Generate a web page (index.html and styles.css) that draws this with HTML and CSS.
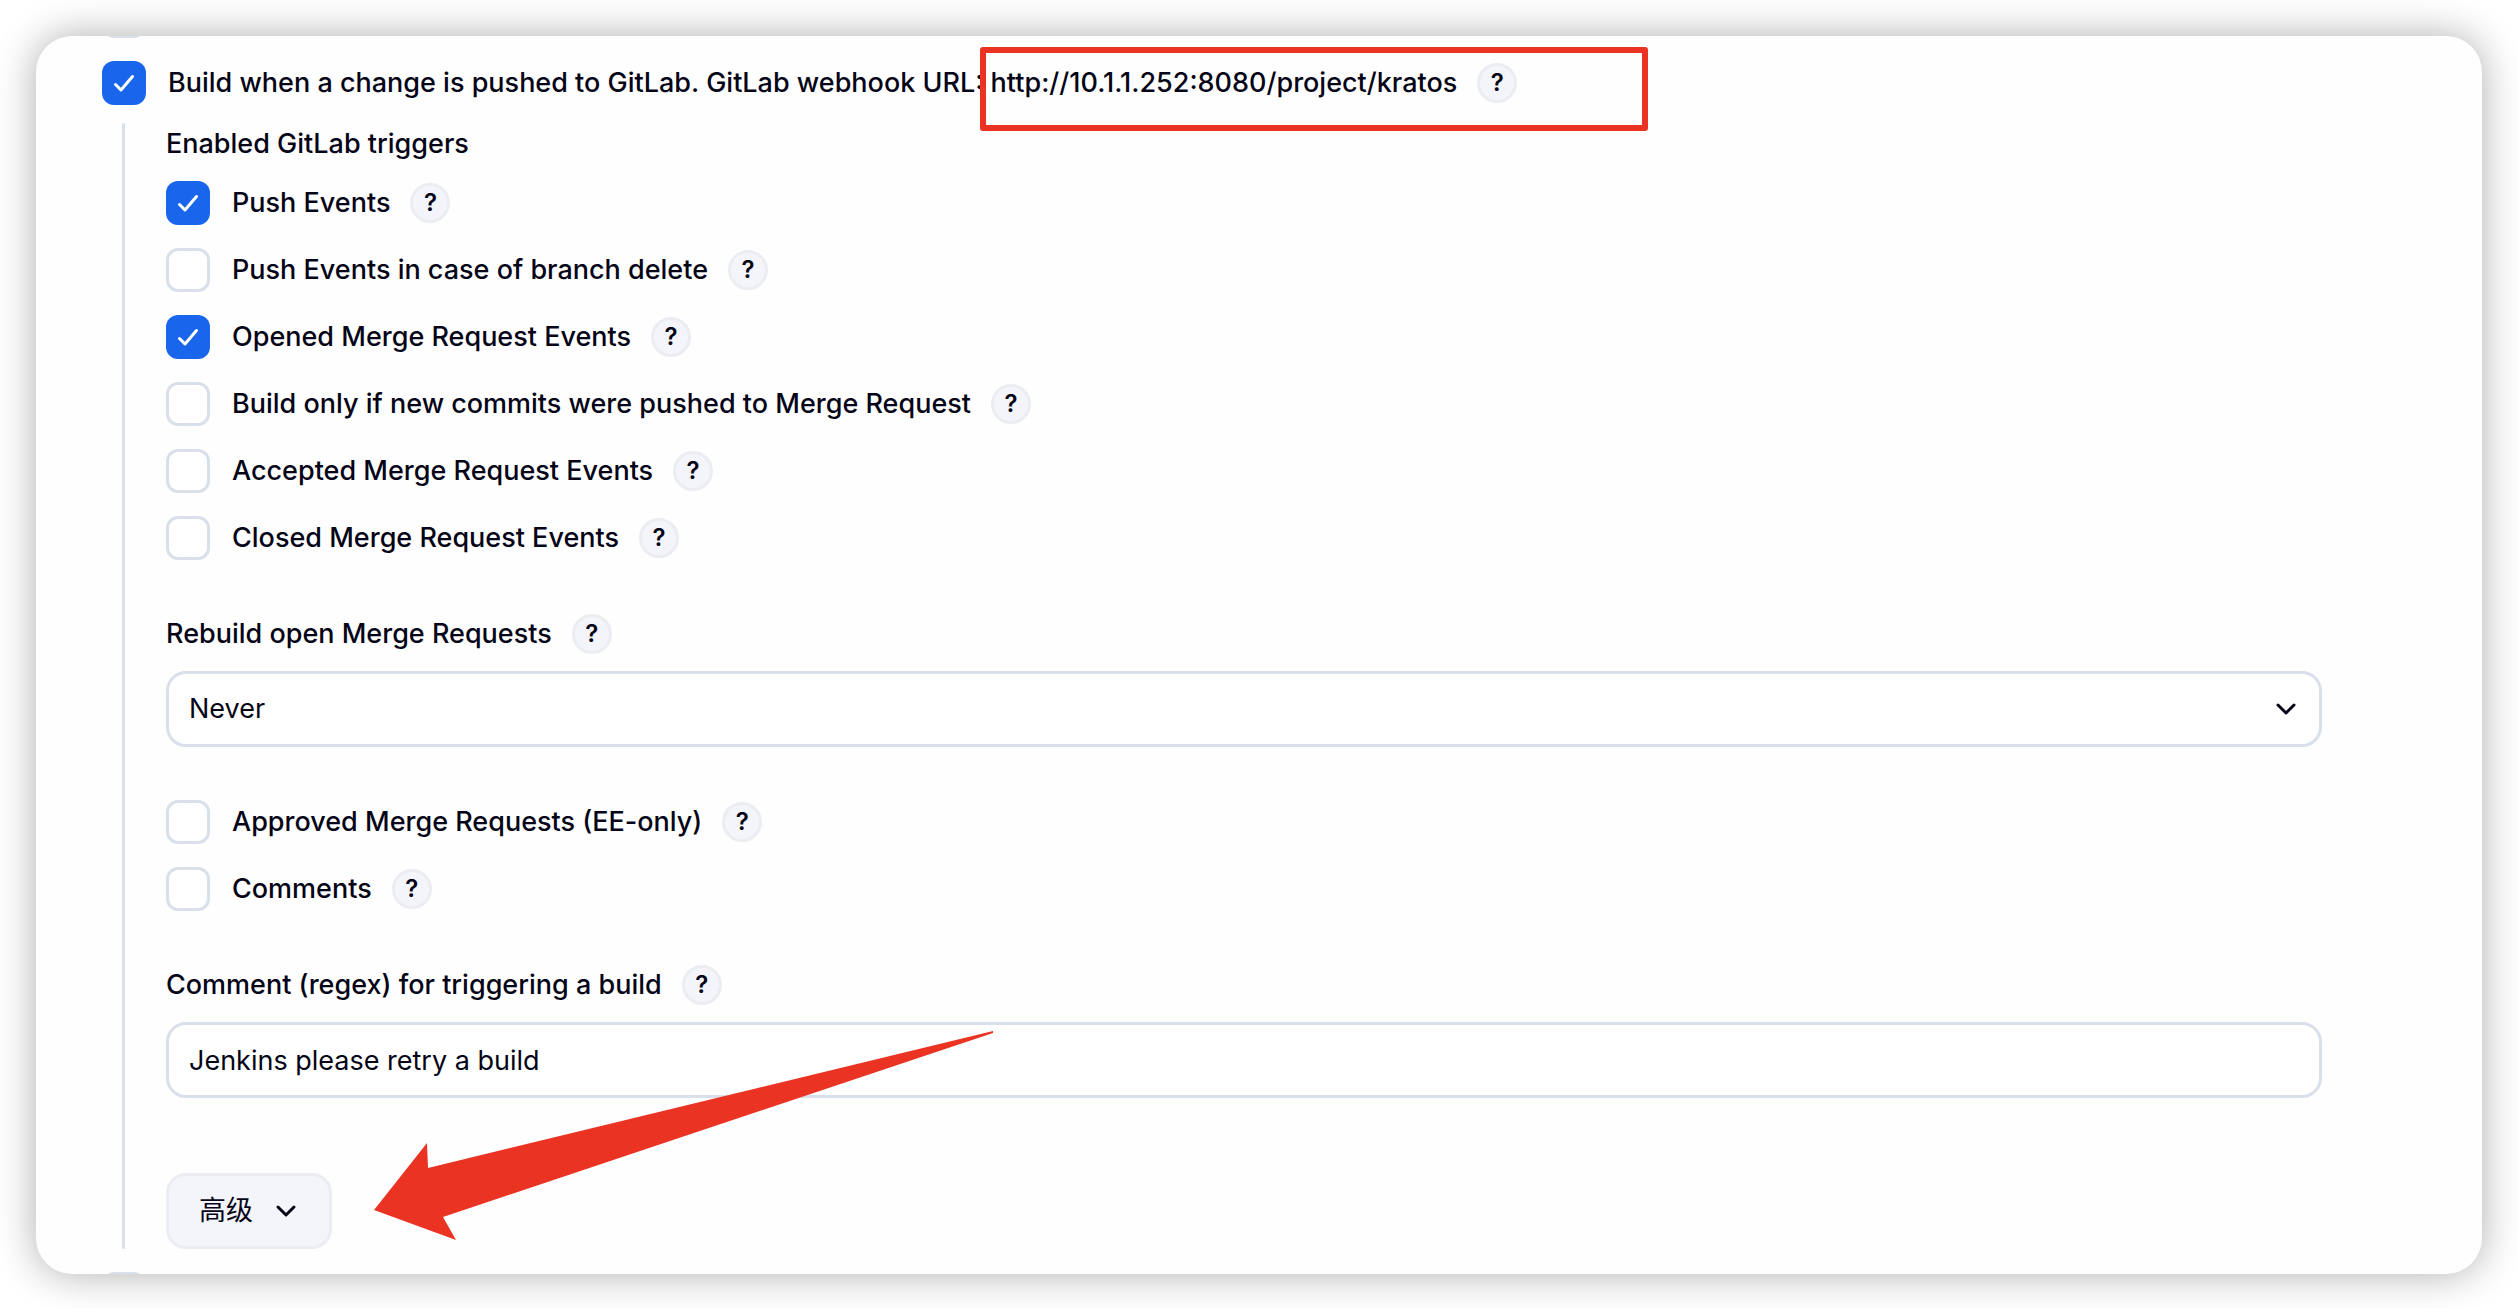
FILE: index.html
```
<!DOCTYPE html>
<html lang="zh-CN">
  <head>
    <meta charset="UTF-8" />
    <meta name="viewport" content="width=device-width, initial-scale=1.0" />
    <title>Build Triggers</title>
    <link rel="stylesheet" href="styles.css">
  </head>
  <body>
    <main class="card">
      <input class="checkbox clipped-top" type="checkbox" aria-label="Previous trigger" />

      <div class="row">
        <input class="checkbox" type="checkbox" id="gitlab" checked />
        <label for="gitlab">Build when a change is pushed to GitLab. GitLab webhook URL: http://10.1.1.252:8080/project/kratos</label>
        <button class="help" type="button">?</button>
      </div>

      <div class="nested">
        <p class="title">Enabled GitLab triggers</p>
        <div class="rows">
          <div class="row">
            <input class="checkbox" type="checkbox" id="push" checked />
            <label for="push">Push Events</label>
            <button class="help" type="button">?</button>
          </div>
          <div class="row">
            <input class="checkbox" type="checkbox" id="branch-delete" />
            <label for="branch-delete">Push Events in case of branch delete</label>
            <button class="help" type="button">?</button>
          </div>
          <div class="row">
            <input class="checkbox" type="checkbox" id="opened" checked />
            <label for="opened">Opened Merge Request Events</label>
            <button class="help" type="button">?</button>
          </div>
          <div class="row">
            <input class="checkbox" type="checkbox" id="new-commits" />
            <label for="new-commits">Build only if new commits were pushed to Merge Request</label>
            <button class="help" type="button">?</button>
          </div>
          <div class="row">
            <input class="checkbox" type="checkbox" id="accepted" />
            <label for="accepted">Accepted Merge Request Events</label>
            <button class="help" type="button">?</button>
          </div>
          <div class="row">
            <input class="checkbox" type="checkbox" id="closed" />
            <label for="closed">Closed Merge Request Events</label>
            <button class="help" type="button">?</button>
          </div>
        </div>

        <div class="field">
          <div class="field-label">
            <label for="rebuild">Rebuild open Merge Requests</label>
            <button class="help" type="button">?</button>
          </div>
          <select class="control select" id="rebuild">
            <option>Never</option>
          </select>
        </div>

        <div class="rows">
          <div class="row">
            <input class="checkbox" type="checkbox" id="approved" />
            <label for="approved">Approved Merge Requests (EE-only)</label>
            <button class="help" type="button">?</button>
          </div>
          <div class="row">
            <input class="checkbox" type="checkbox" id="comments" />
            <label for="comments">Comments</label>
            <button class="help" type="button">?</button>
          </div>
        </div>

        <div class="field">
          <div class="field-label">
            <label for="regex">Comment (regex) for triggering a build</label>
            <button class="help" type="button">?</button>
          </div>
          <input class="control" type="text" id="regex" value="Jenkins please retry a build" />
        </div>

        <button class="advanced" type="button">
          高级
          <svg class="chevron" width="24" height="24" viewBox="0 0 24 24" fill="none" stroke="currentColor" stroke-width="3" stroke-linecap="round" stroke-linejoin="round">
            <path d="M3 8l8 8 8-8" />
          </svg>
        </button>
      </div>

      <input class="checkbox clipped-bottom" type="checkbox" aria-label="Next trigger" />

      <!-- annotations -->
      <div class="mark-box"></div>
      <svg class="mark-arrow" width="620" height="210" viewBox="0 0 620 210">
        <path d="M0 179L53 112L54 137L619 0L619 2L69 186L82 209Z" fill="#ea3323" />
      </svg>
    </main>
  </body>
</html>
```
FILE: styles.css
```
* {
  margin: 0;
  padding: 0;
  box-sizing: border-box;
}
body {
  background-color: #fff;
  color: #050517;
  font-family: Inter, "Noto Sans CJK SC", sans-serif;
  font-size: 27px;
  font-weight: 500;
  line-height: 40px;
}
button,
input,
select {
  font: inherit;
  color: inherit;
}
.card {
  position: relative;
  overflow: hidden;
  margin: 36px;
  padding: 0 160px 0 66px;
  border-radius: 36px;
  background-color: #fefefe;
  box-shadow: 0 0 40px rgba(0, 0, 0, 0.32);
}

/* checkboxes */
.row,
.field-label {
  display: flex;
  align-items: center;
}
.row label {
  padding-left: 22px;
}
.checkbox {
  appearance: none;
  display: block;
  flex: none;
  width: 44px;
  height: 44px;
  border: 3px solid #d9e0ea;
  border-radius: 12px;
  background-color: #fff;
}
.checkbox:checked {
  border: none;
  background: #1966ec url("data:image/svg+xml,%3Csvg xmlns='http://www.w3.org/2000/svg' viewBox='0 0 44 44' fill='none' stroke='white' stroke-width='3' stroke-linecap='round' stroke-linejoin='round'%3E%3Cpath d='M13.5 23.5l5.5 5.500 11.500-13.500'/%3E%3C/svg%3E");
}
.clipped-top {
  margin-top: -42px;
  margin-bottom: 23px;
}
.clipped-bottom {
  margin-top: 23px;
  margin-bottom: -42px;
}
.help {
  flex: none;
  width: 40px;
  height: 40px;
  margin-left: 20px;
  border: 3px solid #ecedf1;
  border-radius: 50%;
  background-color: #f4f5fa;
  font-size: 24px;
  font-weight: 600;
  line-height: 34px;
}

/* settings under the main checkbox */
.nested {
  position: relative;
  margin: 18px 0 0 20px;
  padding-left: 44px;
}
.nested::before {
  content: "";
  position: absolute;
  top: 0;
  bottom: 0;
  left: 0;
  width: 3px;
  border-radius: 2px;
  background-color: #d9e0ea;
}
.title {
  padding: 1px 0 17px;
}
.rows {
  display: flex;
  flex-direction: column;
  gap: 23px;
}
.field {
  margin: 54px 0 53px;
}
.control {
  display: block;
  width: 100%;
  height: 76px;
  margin-top: 17px;
  padding: 0 20px;
  border: 3px solid #d9e0ea;
  border-radius: 20px;
  background-color: #fff;
  font-weight: 400;
}
.select {
  appearance: none;
  background: #fff url("data:image/svg+xml,%3Csvg xmlns='http://www.w3.org/2000/svg' viewBox='0 0 24 24' fill='none' stroke='%23050517' stroke-width='3' stroke-linecap='round' stroke-linejoin='round'%3E%3Cpath d='M4 8l8 8 8-8'/%3E%3C/svg%3E") no-repeat right 21px center / 24px;
}
.advanced {
  display: flex;
  align-items: center;
  gap: 22px;
  height: 76px;
  margin-top: 75px;
  padding: 0 30px;
  border: 3px solid #ecedf1;
  border-radius: 20px;
  background-color: #f4f5fa;
  font-weight: 400;
}

/* annotations */
.mark-box {
  position: absolute;
  top: 11px;
  left: 944px;
  width: 668px;
  height: 84px;
  border: 6px solid #ea3323;
  border-radius: 3px;
}
.mark-arrow {
  position: absolute;
  top: 995px;
  left: 338px;
}
```
